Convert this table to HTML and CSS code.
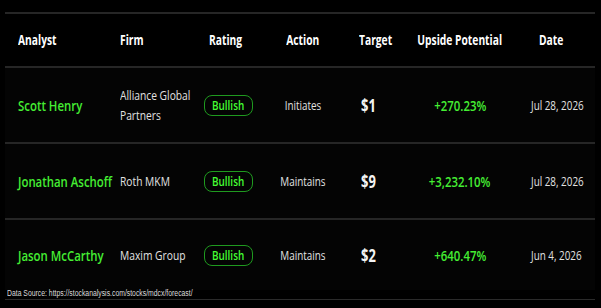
FILE: index.html
```html
<!DOCTYPE html>
<html>
<head>
<meta charset="utf-8">
<link rel="stylesheet" href="styles.css">
</head>
<body>
<div class="table">
  <div class="row head">
    <div class="cell c1"><span class="t">Analyst</span></div>
    <div class="cell c2"><span class="t">Firm</span></div>
    <div class="cell c3h"><span class="t">Rating</span></div>
    <div class="cell c4"><span class="t tc">Action</span></div>
    <div class="cell c5h"><span class="t">Target</span></div>
    <div class="cell c6"><span class="t tc">Upside Potential</span></div>
    <div class="cell c7h"><span class="t">Date</span></div>
  </div>
  <div class="row body">
    <div class="cell c1"><span class="t name">Scott Henry</span></div>
    <div class="cell c2"><span class="t firm">Alliance Global<br>Partners</span></div>
    <div class="cell c3"><span class="badge"><span class="t tc">Bullish</span></span></div>
    <div class="cell c4"><span class="t tc txt">Initiates</span></div>
    <div class="cell c5"><span class="t price">$1</span></div>
    <div class="cell c6"><span class="t tc up">+270.23%</span></div>
    <div class="cell c7"><span class="t txt">Jul 28, 2026</span></div>
  </div>
  <div class="row body">
    <div class="cell c1"><span class="t name">Jonathan Aschoff</span></div>
    <div class="cell c2"><span class="t firm">Roth MKM</span></div>
    <div class="cell c3"><span class="badge"><span class="t tc">Bullish</span></span></div>
    <div class="cell c4"><span class="t tc txt">Maintains</span></div>
    <div class="cell c5"><span class="t price">$9</span></div>
    <div class="cell c6"><span class="t tc up">+3,232.10%</span></div>
    <div class="cell c7"><span class="t txt">Jul 28, 2026</span></div>
  </div>
  <div class="last">
    <div class="row body">
      <div class="cell c1"><span class="t name">Jason McCarthy</span></div>
      <div class="cell c2"><span class="t firm">Maxim Group</span></div>
      <div class="cell c3"><span class="badge"><span class="t tc">Bullish</span></span></div>
      <div class="cell c4"><span class="t tc txt">Maintains</span></div>
      <div class="cell c5"><span class="t price">$2</span></div>
      <div class="cell c6"><span class="t tc up">+640.47%</span></div>
      <div class="cell c7"><span class="t txt">Jun 4, 2026</span></div>
    </div>
    <div class="note"><span class="t nt">Data Source: https://stockanalysis.com/stocks/mdcx/forecast/</span></div>
  </div>
</div>
</body>
</html>
```
FILE: styles.css
```css
html, body {
  margin: 0;
  padding: 0;
  background: #000;
  width: 601px;
  height: 308px;
  overflow: hidden;
}
.table {
  margin: 12px 0 0 5px;
  width: 590px;
  font-family: "Open Sans", "Noto Sans", sans-serif;
  border-top: 2px solid #262626;
}
.row {
  display: grid;
  grid-template-columns: 110px 85px 60px 86px 54px 120px 75px;
  align-items: center;
  border-bottom: 2px solid #262626;
  white-space: nowrap;
}
.row.head {
  height: 52px;
  color: #fff;
  font-weight: 700;
  font-size: 13.5px;
}
.row.body {
  height: 74px;
  background: #040404;
}
.last .row.body {
  height: 70px;
  border-bottom: none;
}
.last {
  border-bottom: 1px solid #2a2a2a;
}
.t {
  display: inline-block;
  transform: scaleX(0.76);
  transform-origin: left center;
}
.t.tc {
  transform-origin: center center;
}
.cell {
  display: flex;
}
.c1 { padding-left: 13px; }
.c2 { padding-left: 5px; }
.c3 { padding-left: 4px; }
.c3h { padding-left: 9px; }
.c4 { justify-content: center; }
.c5 { padding-left: 15px; }
.c5h { padding-left: 13px; }
.c6 { justify-content: center; }
.c7 { padding-left: 11px; }
.c7h { padding-left: 19px; }
.name {
  color: #44ee33;
  font-weight: 600;
  font-size: 15px;
}
.firm, .txt {
  color: #e2e2e2;
  font-size: 13.5px;
  line-height: 20px;
}
.txt {
  transform: scaleX(0.73);
}
.badge {
  display: flex;
  align-items: center;
  justify-content: center;
  width: 47px;
  height: 19px;
  border: 1.5px solid #1f9a1f;
  border-radius: 8px;
  color: #44ff33;
  font-weight: 600;
  font-size: 13px;
}
.price {
  color: #f4f4f4;
  font-weight: 700;
  font-size: 17px;
}
.up {
  color: #44ee33;
  font-weight: 600;
  font-size: 15px;
}
.note {
  height: 9px;
  line-height: 9px;
  padding-left: 2px;
  font-family: "Liberation Sans", Arial, sans-serif;
  font-size: 8.5px;
  color: #dcdcdc;
  white-space: nowrap;
  transform: translateY(-1px);
}
.t.nt {
  transform: scaleX(0.805);
}
```
